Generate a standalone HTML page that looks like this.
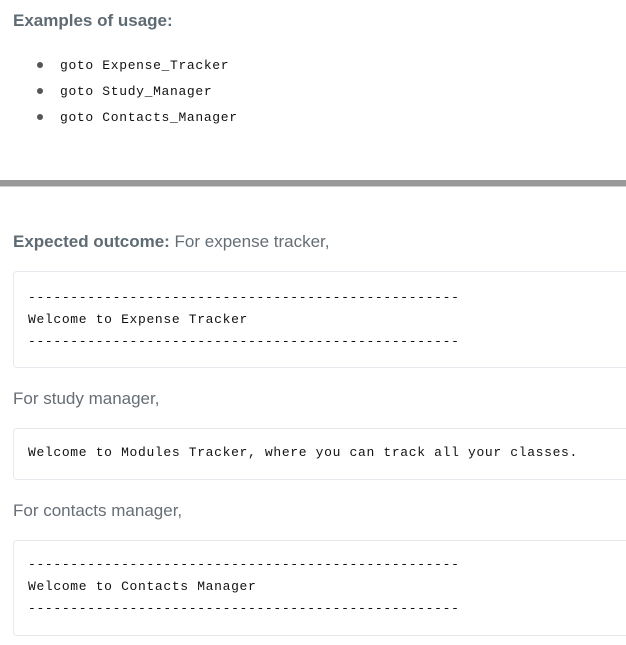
<!DOCTYPE html>
<html><head><style>
body{margin:0;width:626px;height:645px;overflow:hidden;background:#fff;font-family:"Liberation Sans",sans-serif;color:#5f6b73;position:relative}
.a{position:absolute;white-space:pre}
.h{font-weight:bold;font-size:17px;color:#5f6b73}
.t{font-size:17px;color:#666e75}
.m{font-family:"Liberation Mono",monospace;font-size:13px;letter-spacing:.66px;color:#111}
.box{position:absolute;left:13px;width:640px;border:1px solid #e6e9ed;border-radius:4px;background:#fff}
.dot{position:absolute;left:37px;width:6px;height:6px;border-radius:50%;background:#555}
</style></head><body>
<div class="a h" style="left:13px;top:11px">Examples of usage:</div>
<div class="dot" style="top:62px"></div><div class="a m" style="left:60px;top:58px">goto Expense_Tracker</div>
<div class="dot" style="top:88px"></div><div class="a m" style="left:60px;top:84px">goto Study_Manager</div>
<div class="dot" style="top:114px"></div><div class="a m" style="left:60px;top:110px">goto Contacts_Manager</div>
<div style="position:absolute;left:0;top:180px;width:626px;height:6px;background:#999;border-bottom:1px solid #ccc"></div>
<div class="a t" style="left:13px;top:232px"><span class="h">Expected outcome:</span> For expense tracker,</div>
<div class="box" style="top:271px;height:95px"></div>
<div class="a m" style="left:28px;top:287px;line-height:22px">---------------------------------------------------
Welcome to Expense Tracker
---------------------------------------------------</div>
<div class="a t" style="left:13px;top:389px">For study manager,</div>
<div class="box" style="top:428px;height:50px"></div>
<div class="a m" style="left:28px;top:445px">Welcome to Modules Tracker, where you can track all your classes.</div>
<div class="a t" style="left:13px;top:501px">For contacts manager,</div>
<div class="box" style="top:540px;height:94px"></div>
<div class="a m" style="left:28px;top:554px;line-height:22px">---------------------------------------------------
Welcome to Contacts Manager
---------------------------------------------------</div>
</body></html>
